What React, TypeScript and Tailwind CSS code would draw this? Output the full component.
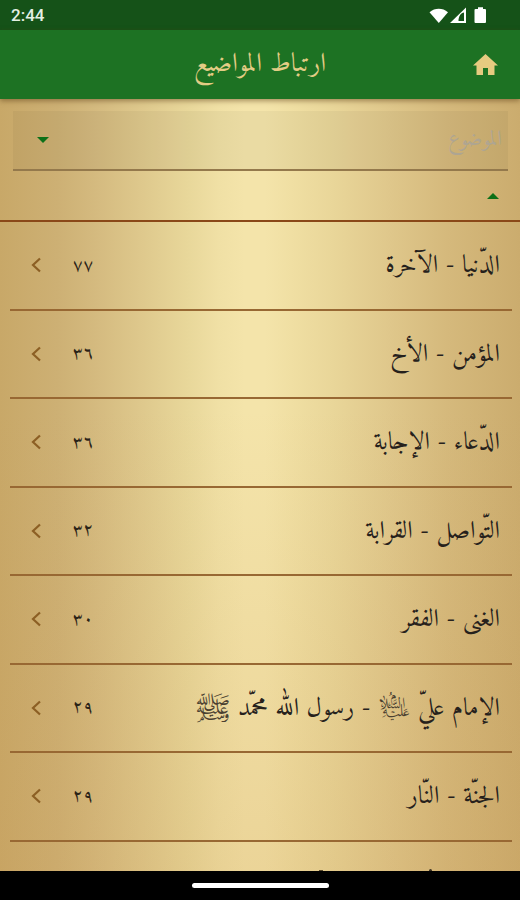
type Topic = {
  title: React.ReactNode;
  count: string;
};

const TOPICS: Topic[] = [
  { title: 'الدّنيا - الآخرة', count: '٧٧' },
  { title: 'المؤمن - الأخ', count: '٣٦' },
  { title: 'الدّعاء - الإجابة', count: '٣٦' },
  { title: 'التّواصل - القرابة', count: '٣٢' },
  { title: 'الغنى - الفقر', count: '٣٠' },
  {
    title: (
      <>
        الإمام عليّ{' '}
        <span className="align-[-1px] text-[24px] leading-[0] text-[#4a4030]">{'\uFD47'}</span> - رسول الله
        محمّد{' '}
        <span className="mr-[2px] align-[-3px] text-[30px] leading-[0] text-[#4a4030]">ﷺ</span>
      </>
    ),
    count: '٢٩',
  },
  { title: 'الجنّة - النّار', count: '٢٩' },
];

function StatusBar() {
  return (
    <div className="flex h-[30px] shrink-0 items-center justify-between bg-[#155218] pt-[2px] pr-[33px] pl-[11px]">
      <span className="font-[Roboto,sans-serif] text-[17px] font-medium text-[#e4f0e4]">2:44</span>
      <svg width="58" height="20" viewBox="0 0 58 20" fill="#fff">
        <path d="M0.5 6.2C6 1.6 13.5 1.6 19 6.2L9.8 17Z" />
        <path fillRule="evenodd" d="M21 17 37 1.5V17ZM29.5 15H35V6.5C32 7 29.5 10 29.5 15Z" />
        <path d="M46.5 3h2.500v-1.800h5v1.800H56a1 1 0 0 1 1 1V16a1 1 0 0 1-1 1H46.500a1 1 0 0 1-1-1V4a1 1 0 0 1 1-1Z" />
      </svg>
    </div>
  );
}

function TopicRow({ title, count }: Topic) {
  return (
    <div className="mr-2 ml-[9.5px] flex h-[88.5px] shrink-0 items-center border-b-[2.5px] border-[#986833] pr-[12px] pl-[21px]">
      <svg width="10" height="16" viewBox="0 0 10 16" fill="none" stroke="#8c5f24" strokeWidth="2.2">
        <path d="M9 1.5 2 8l7 6.500" />
      </svg>
      <span className="ml-[32px] text-[18px] tracking-[3px] text-[#2b2317]">{count}</span>
      <span dir="rtl" className="ml-auto pt-[3px] text-[25px] whitespace-nowrap text-[#26211c]">
        {title}
      </span>
    </div>
  );
}

export default function App() {
  return (
    <div className="flex h-[900px] w-[520px] flex-col overflow-hidden bg-black font-[Amiri,'Scheherazade_New','Noto_Naskh_Arabic',FreeSerif,'Liberation_Serif',serif]">
      <StatusBar />
      <header className="relative z-10 grid h-[69px] shrink-0 grid-cols-[1fr_auto_1fr] items-center bg-[#1d7223] px-[22px] shadow-[0_2px_5px_rgba(90,60,20,0.5)]">
        <span />
        <h1 dir="rtl" className="text-[26.5px] whitespace-nowrap text-[#e3cc85]">
          ارتباط المواضيع
        </h1>
        <svg className="justify-self-end" width="25" height="24" viewBox="0 0 25 24" fill="#e6cb80">
          <path d="M10 22v-7h5v7h6.500v-9.500H25L12.500 1 0 12.500h3.500V22Z" />
        </svg>
      </header>

      <main className="flex h-[772px] shrink-0 flex-col overflow-hidden bg-[linear-gradient(to_bottom,transparent_40%,rgba(200,150,80,0.2)),linear-gradient(to_right,#c8a868_0%,#cdb074_11%,#d5bb80_19%,#dec88c_27%,#e8d79a_36%,#f0e0a5_42%,#f4e4aa_47%,#f4e4aa_51%,#f0dfa3_56%,#e9d699_64%,#dfc78b_75%,#d5b97c_86%,#cbac6e_100%)]">
        <div className="mt-[12px] mr-[12px] ml-[13px] flex h-[60px] shrink-0 items-center justify-between border-b-[2px] border-[#94794c] bg-black/4 pr-[6px] pl-[24px]">
          <svg width="12" height="6" viewBox="0 0 12 6" fill="#0c7018">
            <path d="M0 0H12L6 6Z" />
          </svg>
          <span dir="rtl" className="text-[21.5px] text-[#aea592]">
            الموضوع
          </span>
        </div>
        <div className="flex h-[51px] shrink-0 items-center justify-end border-b-2 border-[#8a4818] pr-[21px]">
          <svg width="12" height="6" viewBox="0 0 12 6" fill="#0c7018">
            <path d="M0 6H12L6 0Z" />
          </svg>
        </div>
        {TOPICS.map((topic, i) => (
          <TopicRow key={i} {...topic} />
        ))}
        {/* Top edge of the next row, cut off by the navigation bar */}
        <div className="mt-auto flex shrink-0 items-end justify-end gap-[106px] pr-[88px]">
          <span className="h-px w-[4px] bg-[#5a4a2c]" />
          <span className="h-[2px] w-[3px] rounded-t-full bg-[#3d3323]" />
        </div>
      </main>

      <footer className="flex flex-1 justify-center pt-[12px]">
        <div className="h-[5px] w-[137px] rounded-full bg-white" />
      </footer>
    </div>
  );
}
